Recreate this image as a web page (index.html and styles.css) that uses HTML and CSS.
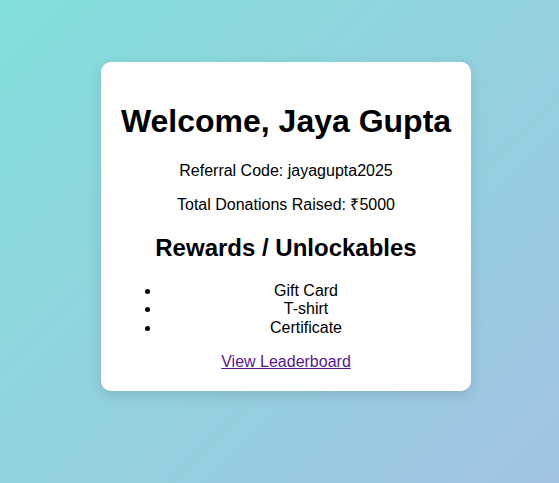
FILE: index.html
```html
<!DOCTYPE html>
<html>
<head>
<meta charset="utf-8">
<title>Dashboard</title>
<link rel="stylesheet" href="styles.css">
</head>
<body>
<div class="page">
  <div class="card">
    <h1 class="title">Welcome, Jaya Gupta</h1>
    <p class="line">Referral Code: jayagupta2025</p>
    <p class="line">Total Donations Raised: ₹5000</p>
    <h2 class="subtitle">Rewards / Unlockables</h2>
    <ul class="rewards">
      <li>Gift Card</li>
      <li>T-shirt</li>
      <li>Certificate</li>
    </ul>
    <p class="line last"><a class="link" href="#">View Leaderboard</a></p>
  </div>
</div>
</body>
</html>
```
FILE: styles.css
```css
html, body {
  margin: 0;
  height: 100%;
}
body {
  font-family: "Liberation Sans", Arial, sans-serif;
  background: linear-gradient(135deg, #83e0da 0%, #a1c3e3 100%);
  color: #000;
  line-height: 1.15;
}
.page {
  padding: 62px 0 0 101px;
}
.card {
  box-sizing: border-box;
  width: 370px;
  background: #fff;
  border-radius: 10px;
  padding: 20px 20px 20px;
  text-align: center;
  box-shadow: 0 4px 14px rgba(0, 0, 0, 0.12);
}
.title {
  font-size: 32px;
  font-weight: bold;
  margin: 21.44px -12px;
  white-space: nowrap;
}
.line {
  font-size: 16px;
  margin: 16px 0;
}
.line.last {
  margin-bottom: 0;
}
.subtitle {
  font-size: 24px;
  font-weight: bold;
  margin: 19.92px 0;
}
.rewards {
  font-size: 16px;
  margin: 16px 0;
  padding-left: 40px;
}
.link {
  color: #551a8b;
}
```
